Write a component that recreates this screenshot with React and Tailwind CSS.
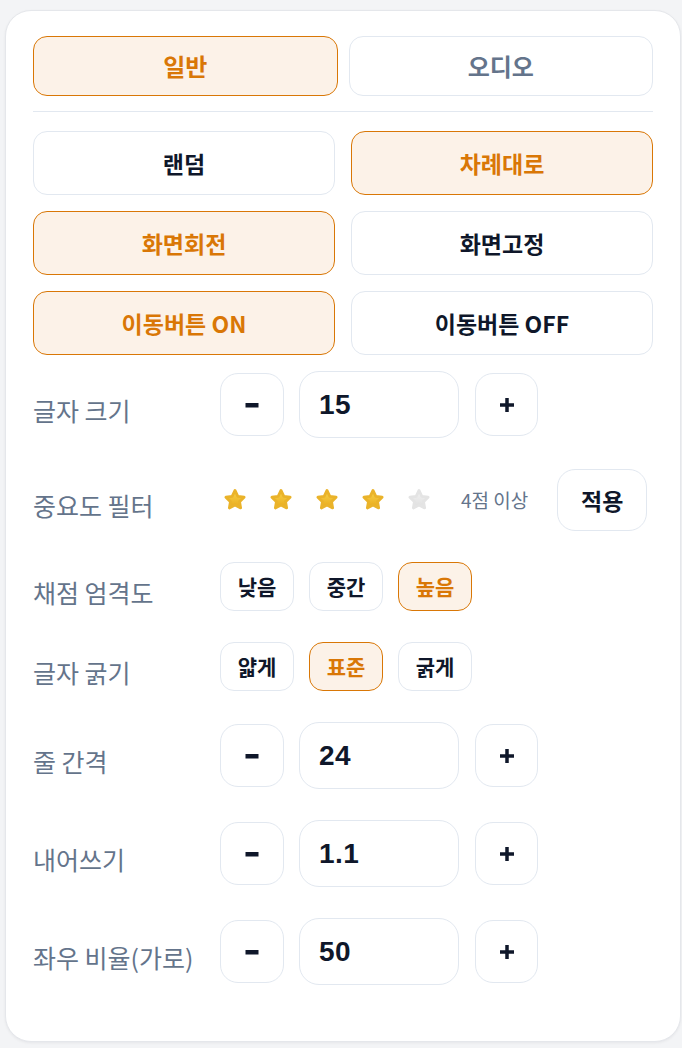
import { useState } from 'react'

const activeCls = 'border-[#d97706] bg-[#fcf2e8] text-[#d97706]'
const idleCls = 'border-[#e2e8f0] bg-white text-[#0f172a]'

function Choice({ active, onClick, className = '', children }) {
  return (
    <button
      type="button"
      onClick={onClick}
      className={`flex items-center justify-center border font-bold ${active ? activeCls : idleCls} ${className}`}
    >
      {children}
    </button>
  )
}

function SettingRow({ label, children }) {
  return (
    <div className="flex items-center">
      <div className="w-[187px] shrink-0 pt-[10px] text-[25px] leading-[32px] text-[#64748b]">{label}</div>
      <div className="flex items-center">{children}</div>
    </div>
  )
}

function MinusGlyph() {
  return (
    <svg width="14" height="14" viewBox="0 0 14 14" aria-hidden="true">
      <rect x="0.5" y="5" width="13" height="4.5" fill="#0f172a" />
    </svg>
  )
}

function PlusGlyph() {
  return (
    <svg width="14" height="14" viewBox="0 0 14 14" aria-hidden="true">
      <rect x="0" y="5.25" width="14" height="3.5" fill="#0f172a" />
      <rect x="5.25" y="0" width="3.5" height="14" fill="#0f172a" />
    </svg>
  )
}

function Stepper({ value, step = 1, onChange }) {
  const dec = () => onChange(Math.round((value - step) * 10) / 10)
  const inc = () => onChange(Math.round((value + step) * 10) / 10)
  return (
    <div className="flex items-center gap-[15px]">
      <button type="button" onClick={dec} className="flex h-[63px] w-[64px] items-center justify-center rounded-[18px] border border-[#e2e8f0] bg-white">
        <MinusGlyph />
      </button>
      <div className="flex h-[67px] w-[160px] items-center rounded-[20px] border border-[#e2e8f0] bg-white px-[19px] font-['Liberation_Sans',sans-serif] text-[28px] font-bold tracking-[0.5px] text-[#0f172a]">
        {value}
      </div>
      <button type="button" onClick={inc} className="ml-[1px] flex h-[63px] w-[63px] items-center justify-center rounded-[18px] border border-[#e2e8f0] bg-white">
        <PlusGlyph />
      </button>
    </div>
  )
}

function Star({ on, onClick }) {
  return (
    <button type="button" onClick={onClick} className="flex h-[26px] w-[26px] items-center justify-center">
      <svg width="26" height="26" viewBox="0 0 24 24" aria-hidden="true">
        <defs>
          <linearGradient id="starOn" x1="0" y1="0" x2="0" y2="1">
            <stop offset="0" stopColor="#f9d44a" />
            <stop offset="1" stopColor="#e8a91b" />
          </linearGradient>
          <linearGradient id="starOff" x1="0" y1="0" x2="0" y2="1">
            <stop offset="0" stopColor="#f3f3f3" />
            <stop offset="1" stopColor="#dedede" />
          </linearGradient>
        </defs>
        <path
          d="M12 3.2l2.6 5.4 5.8.8-4.2 4.1 1 5.8L12 16.6l-5.2 2.7 1-5.8-4.2-4.1 5.8-.8z"
          fill={on ? 'url(#starOn)' : 'url(#starOff)'}
          stroke={on ? '#eab32a' : '#e4e4e4'}
          strokeWidth="2.6"
          strokeLinejoin="round"
        />
      </svg>
    </button>
  )
}

export default function App() {
  const [tab, setTab] = useState('general')
  const [order, setOrder] = useState('sequential')
  const [rotate, setRotate] = useState(true)
  const [moveBtn, setMoveBtn] = useState(true)
  const [fontSize, setFontSize] = useState(15)
  const [stars, setStars] = useState(4)
  const [strict, setStrict] = useState('high')
  const [weight, setWeight] = useState('normal')
  const [lineGap, setLineGap] = useState(24)
  const [indent, setIndent] = useState(1.1)
  const [ratio, setRatio] = useState(50)

  return (
    <div className="min-h-screen bg-[#f3f4f6] px-[5px] pt-[10px] font-['Noto_Sans_CJK_KR',sans-serif]">
      <div className="w-[676px] rounded-[26px] border border-[#e5e7eb] bg-white px-[27px] pb-[56px] pt-[25px] shadow-[0_1px_3px_rgba(15,23,42,0.06)]">
        {/* 탭 */}
        <div className="flex gap-[11px]">
          <Choice active={tab === 'general'} onClick={() => setTab('general')} className="h-[60px] flex-1 rounded-[14px] text-[24px]">
            일반
          </Choice>
          <button
            type="button"
            onClick={() => setTab('audio')}
            className={`flex h-[60px] flex-1 items-center justify-center rounded-[14px] border text-[24px] font-bold ${tab === 'audio' ? activeCls : 'border-[#e2e8f0] bg-white text-[#64748b]'}`}
          >
            오디오
          </button>
        </div>

        <div className="mb-[19px] mt-[15px] h-px bg-[#e2e8f0]" />

        <div className="flex flex-col gap-[16px]">
          <div className="flex gap-[16px]">
            <Choice active={order === 'random'} onClick={() => setOrder('random')} className="h-[64px] flex-1 rounded-[14px] text-[23px]">
              랜덤
            </Choice>
            <Choice active={order === 'sequential'} onClick={() => setOrder('sequential')} className="h-[64px] flex-1 rounded-[14px] text-[23px]">
              차례대로
            </Choice>
          </div>
          <div className="flex gap-[16px]">
            <Choice active={rotate} onClick={() => setRotate(true)} className="h-[64px] flex-1 rounded-[14px] text-[23px]">
              화면회전
            </Choice>
            <Choice active={!rotate} onClick={() => setRotate(false)} className="h-[64px] flex-1 rounded-[14px] text-[23px]">
              화면고정
            </Choice>
          </div>
          <div className="flex gap-[16px]">
            <Choice active={moveBtn} onClick={() => setMoveBtn(true)} className="h-[64px] flex-1 rounded-[14px] text-[23px]">
              이동버튼 ON
            </Choice>
            <Choice active={!moveBtn} onClick={() => setMoveBtn(false)} className="h-[64px] flex-1 rounded-[14px] text-[23px]">
              이동버튼 OFF
            </Choice>
          </div>
        </div>

        <div className="mt-[16px] flex flex-col gap-[31px]">
          <SettingRow label="글자 크기">
            <Stepper value={fontSize} onChange={setFontSize} />
          </SettingRow>

          <SettingRow label="중요도 필터">
            <div className="flex h-[62px] items-center">
              <div className="ml-[2px] flex gap-[20px]">
                {[1, 2, 3, 4, 5].map((n) => (
                  <Star key={n} on={n <= stars} onClick={() => setStars(n)} />
                ))}
              </div>
              <span className="ml-[29px] text-[19px] text-[#64748b]">{stars}점 이상</span>
              <button type="button" className="ml-[29px] flex h-[62px] w-[90px] items-center justify-center rounded-[18px] border border-[#e2e8f0] bg-white text-[23px] font-bold text-[#0f172a]">
                적용
              </button>
            </div>
          </SettingRow>

          <SettingRow label="채점 엄격도">
            <div className="flex gap-[15px]">
              {[
                ['low', '낮음'],
                ['mid', '중간'],
                ['high', '높음'],
              ].map(([key, text]) => (
                <Choice key={key} active={strict === key} onClick={() => setStrict(key)} className="h-[49px] w-[74px] rounded-[14px] text-[21px]">
                  {text}
                </Choice>
              ))}
            </div>
          </SettingRow>

          <SettingRow label="글자 굵기">
            <div className="flex gap-[15px]">
              {[
                ['thin', '얇게'],
                ['normal', '표준'],
                ['bold', '굵게'],
              ].map(([key, text]) => (
                <Choice key={key} active={weight === key} onClick={() => setWeight(key)} className="h-[49px] w-[74px] rounded-[14px] text-[21px]">
                  {text}
                </Choice>
              ))}
            </div>
          </SettingRow>

          <SettingRow label="줄 간격">
            <Stepper value={lineGap} onChange={setLineGap} />
          </SettingRow>

          <SettingRow label="내어쓰기">
            <Stepper value={indent} step={0.1} onChange={setIndent} />
          </SettingRow>

          <SettingRow label="좌우 비율(가로)">
            <Stepper value={ratio} onChange={setRatio} />
          </SettingRow>
        </div>
      </div>
    </div>
  )
}
